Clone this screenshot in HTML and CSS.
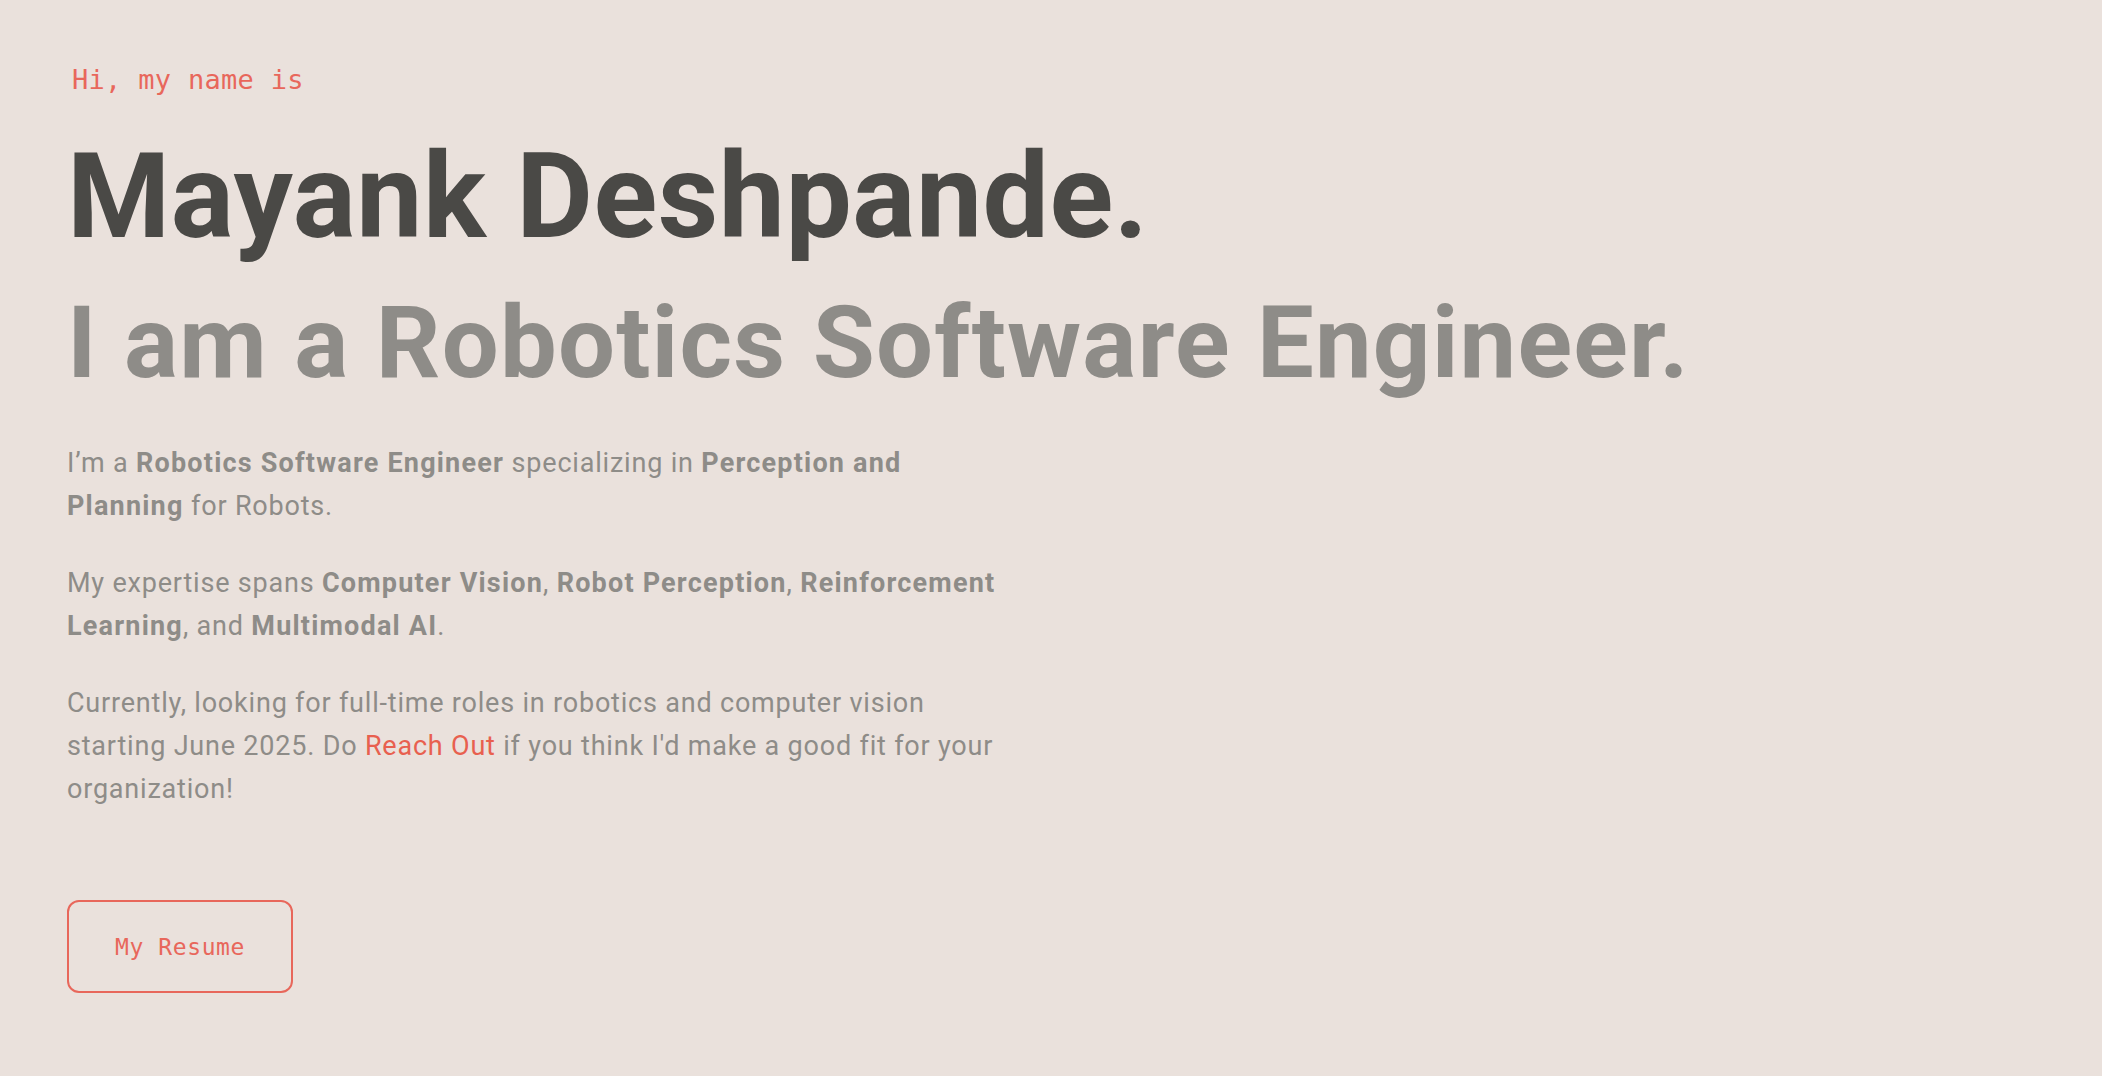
FILE: index.html
```html
<!DOCTYPE html>
<html lang="en">
<head>
<meta charset="utf-8">
<title>Mayank Deshpande</title>
<link rel="stylesheet" href="styles.css">
</head>
<body>
<section class="hero">
  <h1 class="greeting">Hi, my name is</h1>
  <h2 class="name">Mayank Deshpande.</h2>
  <h3 class="role">I am a Robotics Software Engineer.</h3>
  <div class="about">
    <p>I’m a <b>Robotics Software Engineer</b> specializing in <b>Perception and Planning</b> for Robots.</p>
    <p>My expertise spans <b>Computer Vision</b>, <b>Robot Perception</b>, <b>Reinforcement Learning</b>, and <b>Multimodal AI</b>.</p>
    <p>Currently, looking for full-time roles in robotics and computer vision starting June 2025. Do <a class="link" href="#contact">Reach Out</a> if you think I'd make a good fit for your organization!</p>
  </div>
  <a class="resume-btn" href="#resume">My Resume</a>
</section>
</body>
</html>
```

FILE: styles.css
```css
html, body {
  margin: 0;
  padding: 0;
  background: #eae1dc;
}

body {
  font-family: "Roboto", "Liberation Sans", sans-serif;
  min-height: 100vh;
}

.hero {
  display: flex;
  flex-direction: column;
  align-items: flex-start;
  padding: 60px 67px 40px;
}

.greeting {
  margin: 0 0 0 5px;
  font-family: "DejaVu Sans Mono", "Liberation Mono", monospace;
  font-weight: 400;
  font-size: 27px;
  line-height: 40px;
  letter-spacing: 0.3px;
  color: #e8675b;
}

.name {
  margin: 32px 0 0;
  font-size: 118px;
  font-weight: 700;
  line-height: 130px;
  color: #4a4946;
  letter-spacing: 0.5px;
}

.role {
  margin: 25px 0 0;
  font-size: 101px;
  font-weight: 700;
  line-height: 111px;
  color: #8e8c88;
  letter-spacing: 1.2px;
}

.about {
  margin-top: 44px;
  max-width: 950px;
}

.about p {
  margin: 0 0 34px;
  font-size: 27px;
  line-height: 43px;
  letter-spacing: 0.8px;
  color: #8e8c88;
}

.about b {
  font-weight: 700;
  letter-spacing: 1.2px;
}

.link {
  color: #e8604f;
  text-decoration: none;
}

.resume-btn {
  margin-top: 55px;
  display: inline-flex;
  align-items: center;
  justify-content: center;
  width: 226px;
  height: 93px;
  box-sizing: border-box;
  border: 2px solid #e8675b;
  border-radius: 12px;
  font-family: "DejaVu Sans Mono", "Liberation Mono", monospace;
  font-size: 23px;
  letter-spacing: 0.6px;
  color: #e8675b;
  text-decoration: none;
}
```
